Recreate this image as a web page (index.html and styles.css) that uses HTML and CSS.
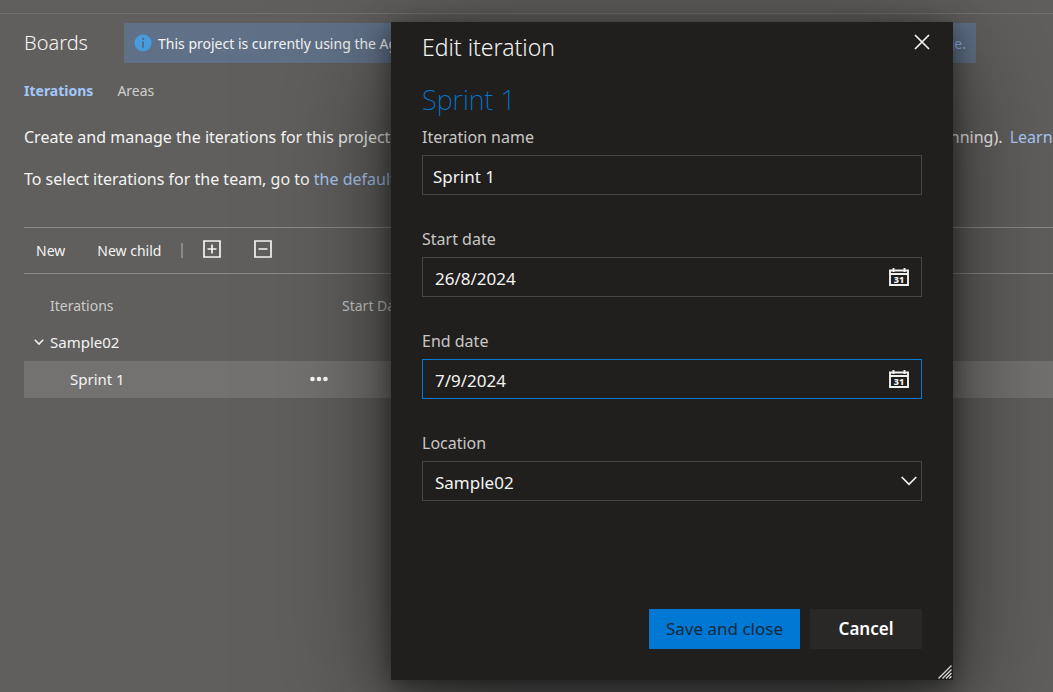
FILE: index.html
```html
<!DOCTYPE html>
<html lang="en">
<head>
<meta charset="utf-8">
<meta name="viewport" content="width=device-width, initial-scale=1">
<title>Boards - Iterations</title>
<link rel="stylesheet" href="styles.css">
</head>
<body>
<header class="topbar"></header>
<main class="page">
  <div class="title-row">
    <h1 class="title">Boards</h1>
    <div class="banner">
      <svg class="info" viewBox="0 0 18 18" aria-hidden="true"><circle cx="9" cy="9" r="8.5" fill="#479cdf"/><path d="M9 3.8v2.2M9 7.2v6.6" stroke="#576c86" stroke-width="2"/></svg>
      <span>This project is currently using the Agile process. To customize your work items,</span>
      <a class="banner-link" href="#">go to the process page.</a>
    </div>
  </div>
  <nav class="tabs">
    <a class="tab tab-active" href="#">Iterations</a>
    <a class="tab" href="#">Areas</a>
  </nav>
  <p class="text">Create and manage the iterations for this project. These iterations will be used by all teams for iteration planning (sprint planning). <a class="link link-next" href="#">Learn more</a></p>
  <p class="text">To select iterations for the team, go to <a class="link" href="#">the default team settings</a>.</p>
  <div class="toolbar">
    <button class="tool" type="button">New</button>
    <button class="tool" type="button">New child</button>
    <span class="divider"></span>
    <button class="tool tool-icon" type="button" aria-label="Expand all"><svg width="18" height="18" viewBox="0 0 18 18"><path d="M1 1h16v16H1zM9 4.500v9M4.500 9h9" fill="none" stroke="#f4f4f3" stroke-width="1.700"/></svg></button>
    <button class="tool tool-icon" type="button" aria-label="Collapse all"><svg width="18" height="18" viewBox="0 0 18 18"><path d="M1 1h16v16H1zM4.500 9h9" fill="none" stroke="#f4f4f3" stroke-width="1.700"/></svg></button>
  </div>
  <table class="grid">
    <thead>
      <tr><th class="name-col">Iterations</th><th>Start Date</th></tr>
    </thead>
    <tbody>
      <tr>
        <td><div class="cell"><svg class="chevron" viewBox="0 0 10 10" aria-hidden="true"><path d="M.8 2.800 5 7 9.200 2.800" fill="none" stroke="#f0f0ef" stroke-width="1.600"/></svg>Sample02</div></td>
        <td></td>
      </tr>
      <tr class="selected">
        <td><div class="cell cell-child">Sprint 1<button class="more" type="button" aria-label="More actions"><svg width="18" height="6" viewBox="0 0 18 6" fill="#fff"><circle cx="2.500" cy="3" r="2.300"/><circle cx="9" cy="3" r="2.300"/><circle cx="15.500" cy="3" r="2.300"/></svg></button></div></td>
        <td></td>
      </tr>
    </tbody>
  </table>
</main>

<div class="dialog" role="dialog" aria-labelledby="dialog-title">
  <header class="dialog-head">
    <h2 class="dialog-title" id="dialog-title">Edit iteration</h2>
    <button class="close" type="button" aria-label="Close"><svg width="16" height="16" viewBox="0 0 16 16"><path d="M1 1l14 14M15 1 1 15" stroke="#f4f4f3" stroke-width="1.700"/></svg></button>
  </header>
  <form class="form">
    <h3 class="sprint">Sprint 1</h3>
    <div class="field">
      <label class="label" for="name">Iteration name</label>
      <div class="box"><input class="input input-name" id="name" type="text" value="Sprint 1"></div>
    </div>
    <div class="field">
      <label class="label" for="start">Start date</label>
      <div class="box">
        <input class="input" id="start" type="text" value="26/8/2024">
        <button class="calendar" type="button" aria-label="Pick start date"><svg width="20" height="18" viewBox="0 0 20 18"><path d="M1 2.500h18V17H1zM1 6h18M4.500 0v4M15.500 0v4" fill="none" stroke="#f1f1f0" stroke-width="1.900"/><text class="day" x="10" y="14.500" text-anchor="middle">31</text></svg></button>
      </div>
    </div>
    <div class="field">
      <label class="label" for="end">End date</label>
      <div class="box box-active">
        <input class="input" id="end" type="text" value="7/9/2024">
        <button class="calendar" type="button" aria-label="Pick end date"><svg width="20" height="18" viewBox="0 0 20 18"><path d="M1 2.500h18V17H1zM1 6h18M4.500 0v4M15.500 0v4" fill="none" stroke="#f1f1f0" stroke-width="1.900"/><text class="day" x="10" y="14.500" text-anchor="middle">31</text></svg></button>
      </div>
    </div>
    <div class="field">
      <label class="label" for="location">Location</label>
      <div class="box box-select">
        <select class="input select" id="location"><option>Sample02</option></select>
        <svg class="arrow" viewBox="0 0 16 10" aria-hidden="true"><path d="M.7 1 8 8.300 15.300 1" fill="none" stroke="#f4f4f3" stroke-width="1.700"/></svg>
      </div>
    </div>
    <div class="actions">
      <button class="button button-primary" type="button">Save and close</button>
      <button class="button" type="button">Cancel</button>
    </div>
  </form>
  <svg class="grip" viewBox="0 0 14 14" aria-hidden="true"><path d="M.5 13.500l13-13M4.500 13.500l9-9M8 13.500l5.500-5.500M11.300 13.500l2.200-2.200" stroke="#d8d8d7" stroke-width="1.300"/></svg>
</div>
</body>
</html>
```
FILE: styles.css
```css
* { box-sizing: border-box; }

body {
  margin: 0;
  min-height: 100vh;
  overflow: hidden;
  position: relative;
  background: #605f5d;
  color: #f4f4f3;
  font-family: "Segoe UI", "Noto Sans", "Open Sans", sans-serif;
  font-size: 14px;
}

button, input, select { font: inherit; color: inherit; }

button {
  padding: 0;
  border: 0;
  background: none;
}

a { text-decoration: none; }
svg { display: block; flex: none; }

.topbar {
  height: 14px;
  border-bottom: 1px solid #73726f;
}

.page { padding: 9px 0 0 24px; }

.title-row {
  display: flex;
  align-items: center;
  gap: 36px;
}

.title {
  margin: 0;
  font-size: 20px;
  font-weight: 300;
  line-height: 40px;
}

.banner {
  flex: 0 1 852px;
  display: flex;
  align-items: center;
  gap: 6px;
  height: 40px;
  padding: 0 10px;
  background: #607187;
  white-space: nowrap;
}

.info { width: 18px; }

.banner-link {
  margin-left: auto;
  color: #8fb8ee;
}

.tabs {
  display: flex;
  gap: 24px;
  margin-top: 18px;
  line-height: 20px;
}

.tab { color: #d0cfce; }

.tab-active {
  color: #a3c7fb;
  font-weight: 700;
}

.text {
  margin: 0 0 18px;
  overflow: hidden;
  font-size: 16px;
  line-height: 24px;
  white-space: nowrap;
}

.tabs + .text { margin-top: 24px; }
.link { color: #abcaf6; }
.link-next { margin-left: 3px; }

.toolbar {
  display: flex;
  align-items: center;
  height: 47px;
  margin-top: 36px;
  padding-left: 12px;
  border: solid #8b8a88;
  border-width: 1px 0;
}

.tool { margin-right: 32px; }

.divider {
  width: 2px;
  height: 15px;
  margin: 0 20px 0 -12px;
  background: #8b8a88;
}

.tool-icon {
  margin-right: 33px;
  padding-bottom: 4px;
}

.grid {
  width: 100%;
  margin-top: 15px;
  border-collapse: collapse;
  table-layout: fixed;
}

.grid th {
  height: 35px;
  padding: 0 0 2px;
  color: #cccbca;
  font-weight: 400;
  text-align: left;
}

.grid .name-col {
  width: 318px;
  padding-left: 26px;
}

.grid td {
  height: 37px;
  padding: 0 0 2px;
  font-size: 15px;
}

.selected { background: #737270; }

.cell {
  display: flex;
  align-items: center;
  gap: 6px;
  padding-left: 10px;
}

.cell-child {
  justify-content: space-between;
  padding: 0 14px 0 46px;
}

.chevron { width: 10px; }

.dialog {
  position: absolute;
  top: 22px;
  left: 391px;
  width: 562px;
  padding: 0 31px 31px;
  background: #201f1d;
  box-shadow: 0 32px 110px rgba(0, 0, 0, .55), 0 6px 26px rgba(0, 0, 0, .5);
}

.dialog-head {
  display: flex;
  align-items: center;
  justify-content: space-between;
  height: 50px;
}

.dialog-title {
  margin: 0;
  font-size: 23px;
  font-weight: 300;
}

.close { margin: 0 -8px 10px 0; }

.form {
  display: flex;
  flex-direction: column;
}

.sprint {
  margin: 8px 0 0;
  color: #0078d4;
  font-size: 27px;
  font-weight: 200;
  line-height: 40px;
}

.field { margin-bottom: 27px; }

.label {
  display: block;
  padding: 5px 0 6px;
  color: #c8c7c5;
  font-size: 16px;
  line-height: 24px;
}

.box {
  display: flex;
  align-items: center;
  position: relative;
  height: 40px;
  border: 1px solid #484745;
}

.box-active { border-color: #0078d4; }

.input {
  flex: 1;
  min-width: 0;
  height: 100%;
  padding: 2px 12px 0;
  border: 0;
  outline: 0;
  background: none;
  font-size: 17px;
}

.input-name { padding-left: 10px; }
.calendar { margin-right: 12px; }

.day {
  fill: #f4f4f3;
  font-size: 9px;
  font-weight: 800;
}

.select {
  appearance: none;
  background: #201f1d;
}

.arrow {
  position: absolute;
  right: 4px;
  width: 16px;
  pointer-events: none;
}

.actions {
  display: flex;
  justify-content: flex-end;
  gap: 10px;
  margin-top: 81px;
}

.button {
  min-width: 112px;
  height: 40px;
  padding: 0 17px 2px;
  background: #292827;
  color: #fff;
  font-size: 17px;
  font-weight: 600;
}

.button-primary {
  background: #0078d4;
  color: #16293a;
  font-weight: 400;
}

.grip {
  position: absolute;
  right: 1px;
  bottom: 1px;
  width: 14px;
}
```
